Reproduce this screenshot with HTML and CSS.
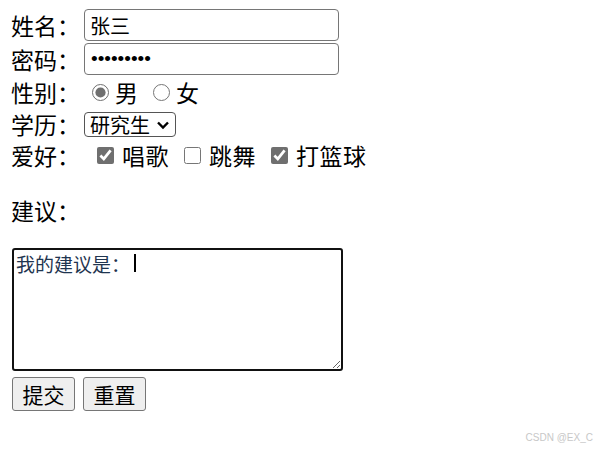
FILE: index.html
```html
<!DOCTYPE html>
<html lang="zh-CN">

<head>
    <meta charset="UTF-8">
    <meta name="viewport" content="width=device-width, initial-scale=1.0">
    <title>表单</title>
    <link rel="stylesheet" href="styles.css">
</head>

<body>
<form class="form">
    <div class="row row-text">
        <span class="label">姓名：</span>
        <input class="field" type="text" value="张三">
    </div>
    <div class="row row-text">
        <span class="label">密码：</span>
        <input class="field field-pass" type="password" value="123456789">
    </div>
    <div class="row row-sex">
        <span class="label">性别：</span>
        <div class="options options-radio">
            <label class="option"><input type="radio" name="sex" checked>男</label>
            <label class="option"><input type="radio" name="sex">女</label>
        </div>
    </div>
    <div class="row row-edu">
        <span class="label">学历：</span>
        <div class="select-box">
            <select class="select">
                <option>研究生</option>
                <option>本科</option>
                <option>专科</option>
            </select>
            <svg class="chevron" width="14" height="10" viewBox="0 0 14 10">
                <path d="M2 2.5 L7 7.5 L12 2.5" fill="none" stroke="#000" stroke-width="2.4"/>
            </svg>
        </div>
    </div>
    <div class="row row-hobby">
        <span class="label">爱好：</span>
        <div class="options options-check">
            <label class="option"><input type="checkbox" checked>唱歌</label>
            <label class="option"><input type="checkbox">跳舞</label>
            <label class="option"><input type="checkbox" checked>打篮球</label>
        </div>
    </div>

    <div class="advice-title">建议：</div>
    <div class="advice-box">
        <textarea class="advice">我的建议是：</textarea>
        <!-- 光标 -->
        <span class="caret"></span>
    </div>

    <div class="buttons">
        <button type="submit" class="btn">提交</button>
        <button type="reset" class="btn">重置</button>
    </div>
</form>

<div class="watermark">CSDN @EX_C</div>
</body>

</html>
```

FILE: styles.css
```css
body {
    margin: 9px 10px;
    font-family: "Noto Sans CJK SC", "Microsoft YaHei", sans-serif;
    font-size: 23px;
    color: #000;
    background-color: #fff;
}

.row {
    display: flex;
    align-items: center;
    margin-bottom: 2px;
}

.row-text {
    height: 32px;
}

.row-sex {
    height: 31px;
}

.row-edu {
    height: 29px;
}

.row-hobby {
    height: 28px;
}

.label {
    width: 74px;
    flex-shrink: 0;
    margin-left: 1px;
    line-height: 1;
}

.field {
    box-sizing: border-box;
    width: 255px;
    height: 32px;
    margin: 0 0 0 -1px;
    padding: 0 5px;
    border: 1px solid #767676;
    border-radius: 4px;
    font-family: inherit;
    font-size: 20px;
}

.field-pass {
    padding-left: 6px;
    font-family: "Liberation Sans", Arial, sans-serif;
    font-size: 19px;
}

.options {
    display: flex;
    align-items: center;
}

.options-radio {
    gap: 15px;
    margin-left: 7px;
}

.options-check {
    gap: 15px;
    margin-left: 12px;
}

.option {
    display: flex;
    align-items: center;
    gap: 6px;
    line-height: 1;
}

.option input {
    flex: none;
    width: 17px;
    height: 17px;
    margin: 0;
    accent-color: #6f6f6f;
}

.options-check .option {
    gap: 8px;
    letter-spacing: 0.5px;
}

.select-box {
    position: relative;
    margin-left: -1px;
}

.select {
    display: block;
    box-sizing: border-box;
    height: 25px;
    width: 92px;
    margin: 0;
    padding: 0 20px 0 5px;
    border: 1px solid #555;
    border-radius: 4px;
    background-color: #fff;
    appearance: none;
    font-family: inherit;
    font-size: 20px;
    line-height: 23px;
    color: #000;
}

.chevron {
    position: absolute;
    right: 6px;
    top: 8px;
    pointer-events: none;
}

.advice-title {
    margin-top: 30px;
    margin-left: 1px;
    line-height: 22px;
}

.advice-box {
    position: relative;
    width: 331px;
    margin: 27px 0 0 2px;
}

.advice {
    display: block;
    box-sizing: border-box;
    width: 331px;
    height: 123px;
    margin: 0;
    padding: 3px 2px;
    border: 2px solid #111;
    border-radius: 3px;
    font-family: "Noto Sans CJK SC", serif;
    font-size: 19px;
    line-height: 22px;
    color: #1f3550;
}

.caret {
    position: absolute;
    left: 122px;
    top: 6px;
    width: 2px;
    height: 18px;
    background-color: #000;
}

.buttons {
    display: flex;
    gap: 8px;
    margin: 6px 0 0 2px;
}

.btn {
    box-sizing: border-box;
    width: 63px;
    height: 34px;
    margin: 0;
    padding: 0;
    border: 1px solid #767676;
    border-radius: 3px;
    background-color: #efefef;
    font-family: inherit;
    font-size: 21px;
    color: #000;
}

.watermark {
    position: absolute;
    right: 5px;
    bottom: 6px;
    font-family: "Liberation Sans", Arial, sans-serif;
    font-size: 10px;
    color: #c8c8c8;
}
```
